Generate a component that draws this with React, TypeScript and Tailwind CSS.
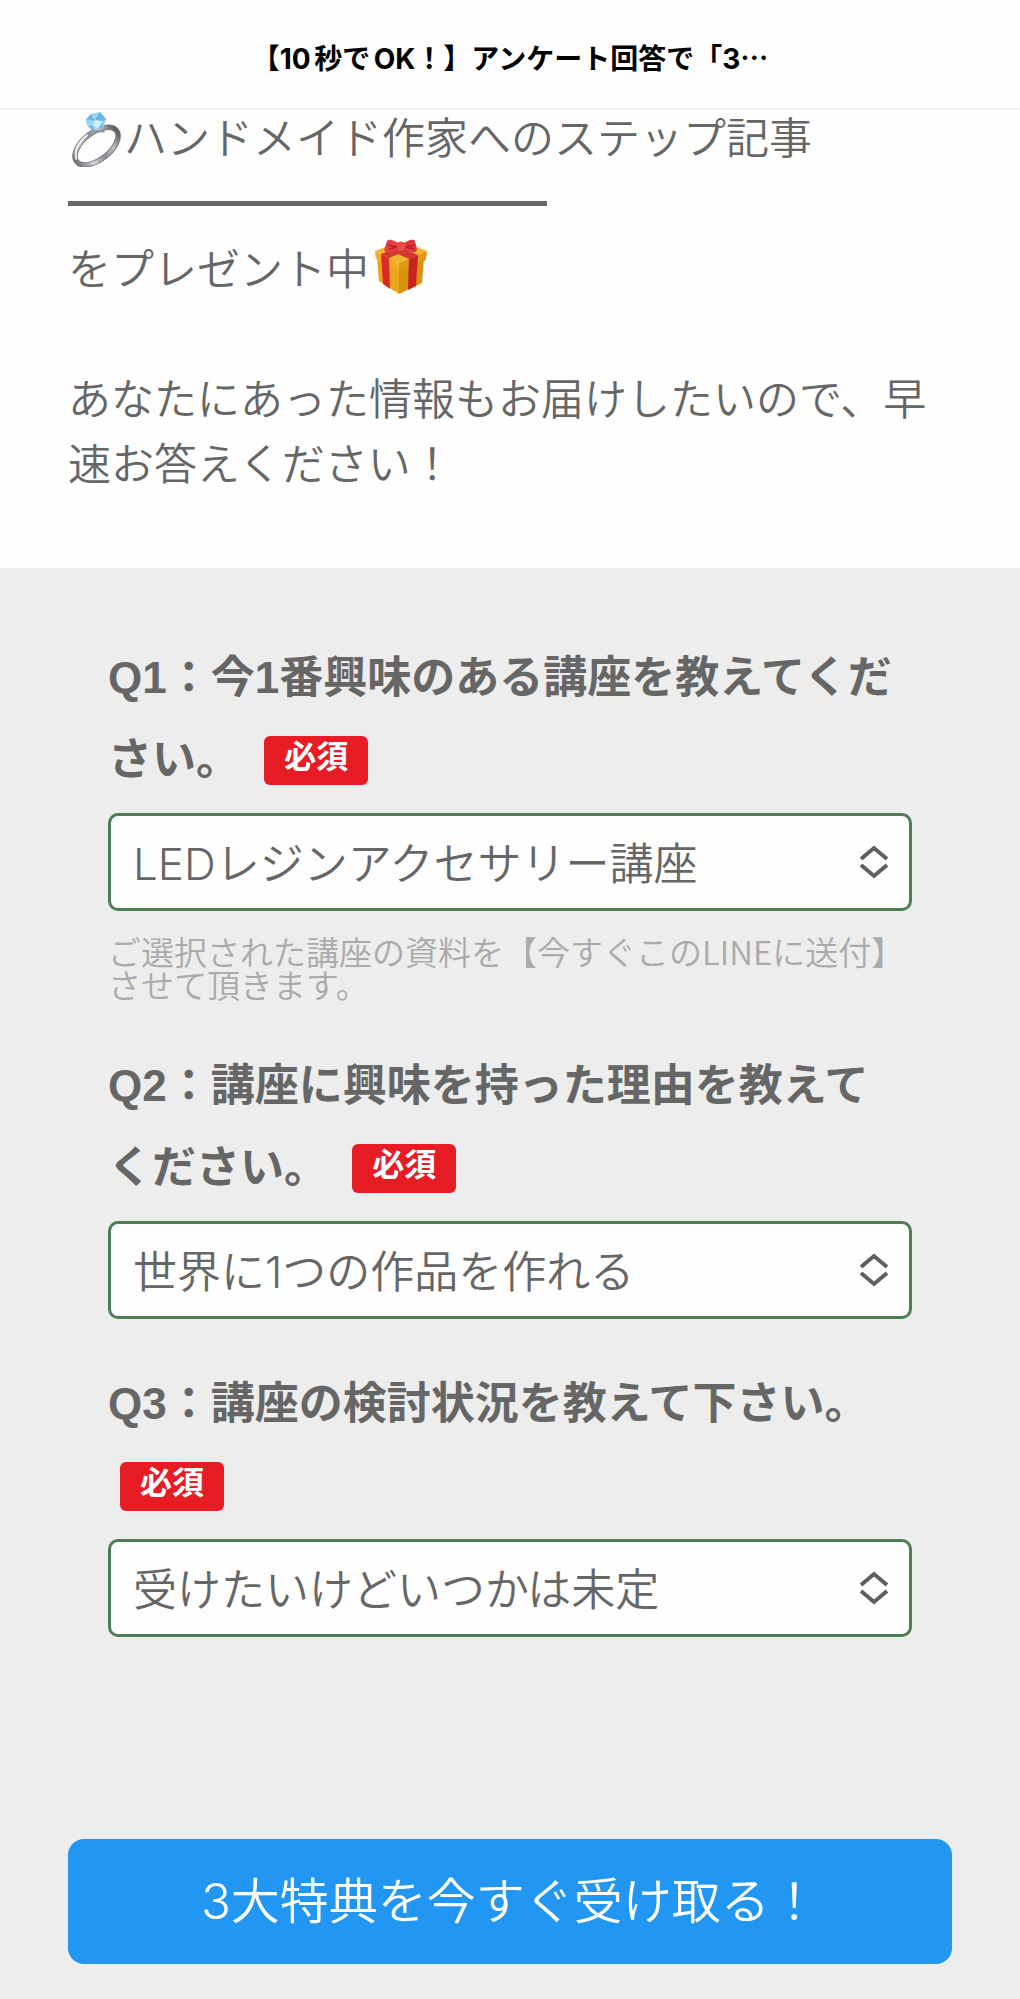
import React from "react";

type Question = {
  id: string;
  label: string;
  options: string[];
  note?: string;
};

const questions: Question[] = [
  {
    id: "q1",
    label: "Q1：今1番興味のある講座を教えてください。",
    options: ["LEDレジンアクセサリー講座"],
    note: "ご選択された講座の資料を【今すぐこのLINEに送付】させて頂きます。",
  },
  {
    id: "q2",
    label: "Q2：講座に興味を持った理由を教えてください。",
    options: ["世界に1つの作品を作れる"],
  },
  {
    id: "q3",
    label: "Q3：講座の検討状況を教えて下さい。",
    options: ["受けたいけどいつかは未定"],
  },
];

function RingIcon() {
  return (
    <svg viewBox="-2 -11 62 71" className="w-14 h-16 shrink-0" aria-hidden="true">
      <defs>
        <linearGradient id="silver" x1="0" y1="0" x2="1" y2="0">
          <stop offset="0" stopColor="#77777d" />
          <stop offset="0.25" stopColor="#d2d2d7" />
          <stop offset="0.5" stopColor="#8c8c92" />
          <stop offset="0.75" stopColor="#c2c2c8" />
          <stop offset="1" stopColor="#5c5c61" />
        </linearGradient>
      </defs>
      <g transform="rotate(-38 29 36)" fill="none">
        <ellipse cx="29" cy="37" rx="28" ry="15" stroke="#77777d" strokeWidth="6" />
        <ellipse cx="29" cy="37" rx="28" ry="15" stroke="url(#silver)" strokeWidth="4" />
        <path d="M2 35C6 26 16 21 29 21" stroke="#f4f4f7" strokeWidth="2" />
      </g>
      <g transform="translate(-1 0) scale(1.15)">
        <path d="M20 13l5 4 7-1 4-3-2 6H23z" fill="#8e979f" />
        <path d="M16 7l5-6 9-2 6 7-3 8-8 3-7-4z" fill="#9bd6f2" />
        <path d="M21 1l4 6-9 0zM30-1l-5 8 8 1 3-2z" fill="#6fb6e4" />
        <path d="M25 7l8 1-5 7-5-3z" fill="#c9f2fc" />
        <path d="M18 13l5-1 2 5zM33 14l-5 1 5-7z" fill="#78bce6" />
      </g>
    </svg>
  );
}

function GiftIcon() {
  return (
    <svg viewBox="0 0 56 56" className="ml-1 w-14 h-14 shrink-0" aria-hidden="true">
      <path d="M4 18l22 11v26L6 42z" fill="#eba51c" />
      <path d="M26 29l25-10-2 25-23 11z" fill="#d89212" />
      <path d="M2 12L28 2l26 10-28 12z" fill="#f4b52c" />
      <path d="M2 12l24 12v8L3 20z" fill="#f2ad22" />
      <path d="M26 24l28-12-1 9-27 11z" fill="#dd9916" />
      <path d="M8 15l8 4 1 31-7-5z" fill="#d82b24" />
      <path d="M36 20l9-4-2 31-8 4z" fill="#c9231f" />
      <path d="M8 15l28-11 8 3-28 12zM18 5l27 11-9 4L12 9z" fill="#d93530" />
      <path d="M27 6C21 0 15 0 14 2l-3 9c2 4 10 2 16-2z" fill="#e63f42" />
      <path d="M29 6c6-6 12-6 13-4l2 9c-1 4-9 2-15-2z" fill="#dd353b" />
      <path d="M15 6l9 2-8 2M41 6l-8 2 8 2" fill="none" stroke="#b91f25" strokeWidth="1.5" />
      <rect x="24" y="3" width="8" height="9" rx="3" fill="#ea4a4c" />
    </svg>
  );
}

function RequiredBadge() {
  return (
    <span className="inline-block ml-3 mb-1.5 px-5 pb-1.5 rounded-md bg-[#e71c24] text-white text-[32px] leading-[43px] align-middle">
      必須
    </span>
  );
}

function QuestionField({ id, label, options, note }: Question) {
  return (
    <div>
      <label
        htmlFor={id}
        className="block pr-3 text-[44px] leading-[82px] font-bold font-['Liberation_Sans','Noto_Sans_CJK_JP',sans-serif]"
      >
        {label} <RequiredBadge />
      </label>
      <div className="relative mt-3">
        <select
          id={id}
          className="block w-full h-[98px] pl-[22px] pr-20 pt-1 appearance-none rounded-[10px] border-3 border-[#4d7d55] bg-[#fefefe] text-[44px] font-[350] font-['Inter','Noto_Sans_CJK_JP',sans-serif]"
        >
          {options.map((option) => (
            <option key={option}>{option}</option>
          ))}
        </select>
        <svg
          viewBox="0 0 28 34"
          className="absolute right-6 top-1/2 -translate-y-1/2 w-7 h-[34px] pointer-events-none"
          fill="none"
          stroke="#5f5f5f"
          strokeWidth="4"
          aria-hidden="true"
        >
          <path d="M1 14L14 3l13 11M1 20l13 11 13-11" />
        </svg>
      </div>
      {note && (
        <p className="mt-6 text-[33px] leading-[33px] font-[350] text-[#aaa]">{note}</p>
      )}
    </div>
  );
}

export default function App() {
  return (
    <div className="min-h-screen flex flex-col bg-[#fefefe] text-[#666] font-['Noto_Sans_CJK_JP',sans-serif]">
      <header className="h-[110px] flex items-center justify-center pt-2 border-b-2 border-[#f2f2f2]">
        <h1 className="text-[28px] font-bold text-black font-['Inter','Noto_Sans_CJK_JP',sans-serif] [text-autospace:normal]">
          【10秒でOK！】アンケート回答で「3
          <span className="font-['Noto_Sans_CJK_JP',sans-serif]">⋯</span>
        </h1>
      </header>

      {/* Intro */}
      <section className="px-[68px] pb-[74px] text-[43px] leading-[65px] font-[350]">
        <p className="flex items-center h-[50px]">
          <RingIcon />
          ハンドメイド作家へのステップ記事
        </p>
        <hr className="w-[479px] mt-[41px] mb-7 border-t-5 border-[#666]" />
        <p className="flex items-center">
          をプレゼント中
          <GiftIcon />
        </p>
        <p className="mt-[65px]">
          あなたにあった情報もお届けしたいので、早速お答えください！
        </p>
      </section>

      {/* Survey form */}
      <form
        className="grow px-[68px] pt-[69px] pb-[35px] bg-[#ededed]"
        onSubmit={(e) => e.preventDefault()}
      >
        <div className="px-10 flex flex-col gap-11">
          {questions.map((question) => (
            <QuestionField key={question.id} {...question} />
          ))}
        </div>
        <button
          type="submit"
          className="mt-[202px] w-full h-[125px] rounded-2xl bg-[#2196f3] text-white text-[49px] font-[350] font-['Inter','Noto_Sans_CJK_JP',sans-serif]"
        >
          3大特典を今すぐ受け取る！
        </button>
      </form>
    </div>
  );
}
